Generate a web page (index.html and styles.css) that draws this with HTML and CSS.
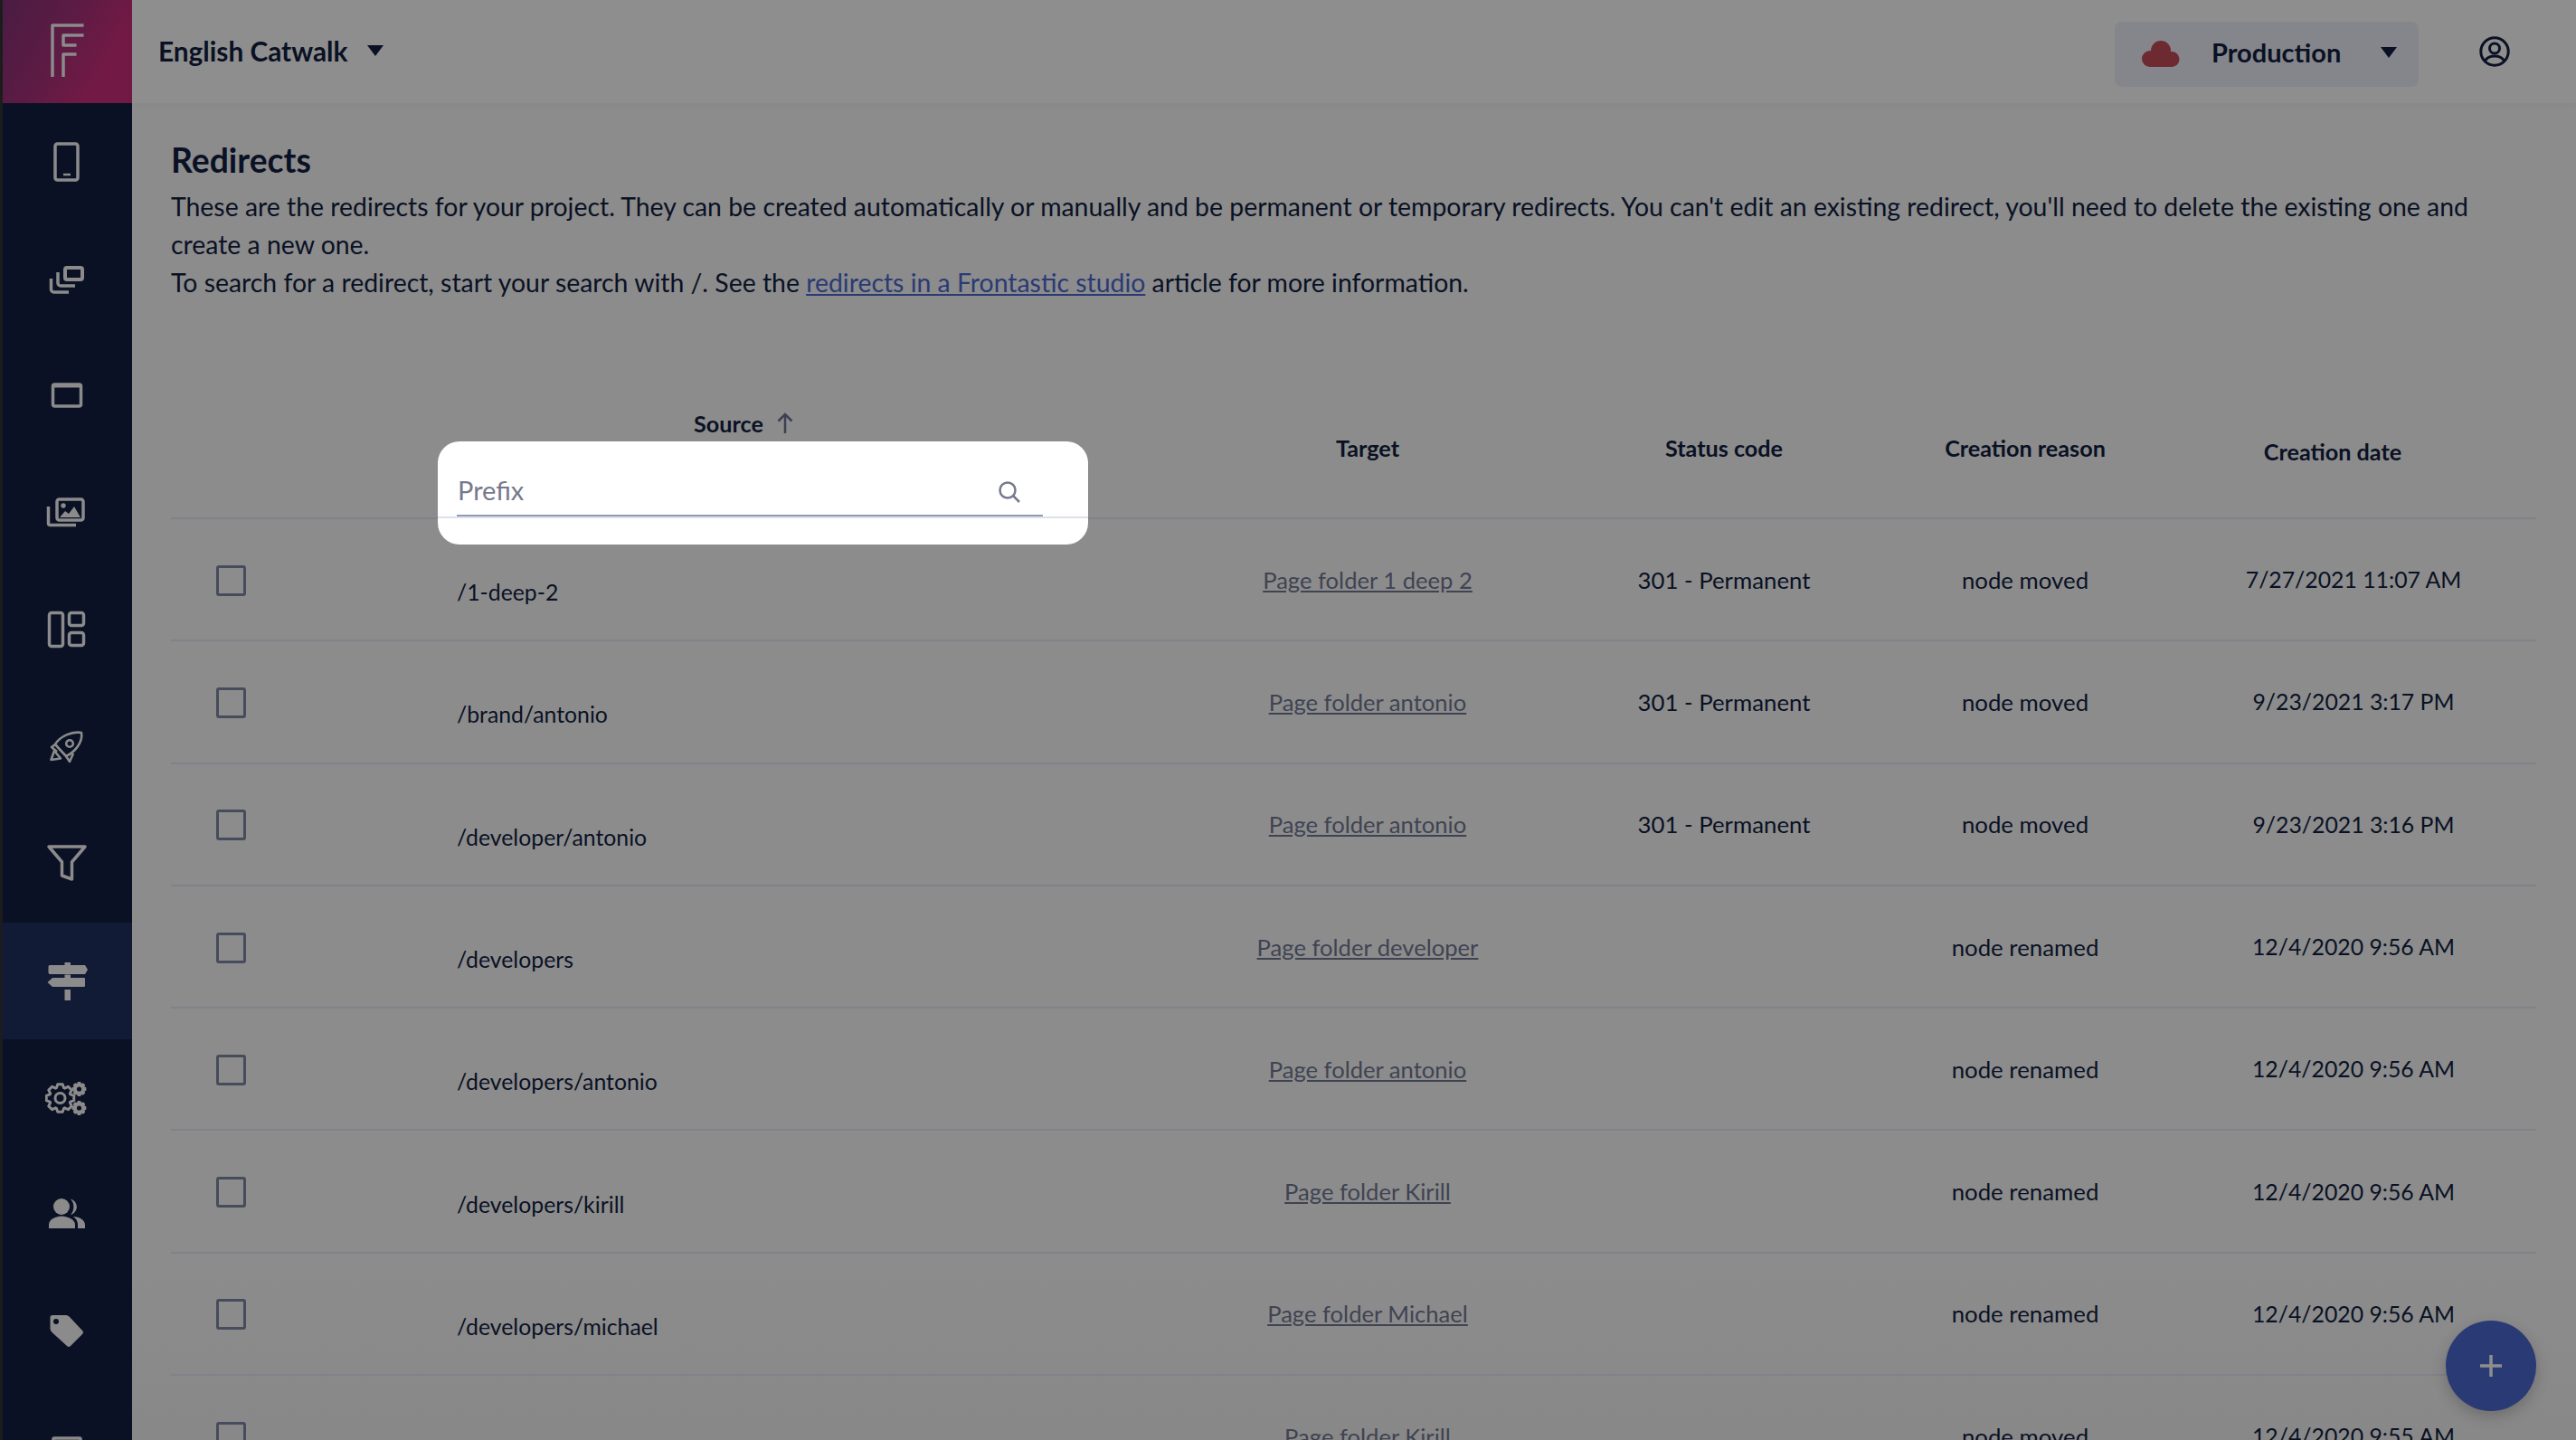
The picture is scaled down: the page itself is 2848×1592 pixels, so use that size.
FILE: index.html
```html
<!DOCTYPE html>
<html lang="en">
<head>
<meta charset="utf-8">
<title>Redirects</title>
<link rel="stylesheet" href="styles.css">
</head>
<body>
<div class="app">
  <nav class="rail">
    <div class="logo">
      <svg width="48" height="64" viewBox="0 0 48 64" class="ico-line"><path d="M7 60V3H41.500"/><path d="M41.500 14H19V25H33.500"/><path d="M33.500 35H19V60"/></svg>
    </div>
    <a class="rail-item"><svg width="48" height="48" viewBox="0 0 48 48" class="ico-line"><rect x="11" y="4" width="25" height="40" rx="2.5"/><path d="M20 38H28" stroke-width="2.5"/></svg></a>
    <a class="rail-item"><svg width="48" height="48" viewBox="0 0 48 48" class="ico-line"><path d="M24 12H39a2 2 0 0 1 2 2V23a2 2 0 0 1-2 2H24a2 2 0 0 1-2-2V14a2 2 0 0 1 2-2Z" stroke-width="4"/><path d="M14 17V29a3 3 0 0 0 3 3H33"/><path d="M6.500 24V36a3 3 0 0 0 3 3H26"/></svg></a>
    <a class="rail-item"><svg width="48" height="48" viewBox="0 0 48 48" class="ico-line"><rect x="8.500" y="12" width="31" height="24" rx="2"/><path d="M8 13.500H40" stroke-width="4"/></svg></a>
    <a class="rail-item"><svg width="48" height="48" viewBox="0 0 48 48"><g class="ico-line"><rect x="13" y="9" width="29" height="23" rx="2.500"/><path d="M3.500 17V35.500a2 2 0 0 0 2 2H34"/></g><circle cx="20" cy="16" r="2.700" class="ico-fill"/><path d="M16 29L22 22L26 25L32 17L39 29Z" class="ico-fill"/></svg></a>
    <a class="rail-item"><svg width="48" height="48" viewBox="0 0 48 48" class="ico-line"><rect x="4.500" y="5.500" width="15" height="37" rx="2.500"/><rect x="26.500" y="5.500" width="16" height="14" rx="2.500"/><rect x="26.500" y="27.500" width="16" height="14" rx="2.500"/></svg></a>
    <a class="rail-item"><svg width="48" height="48" viewBox="0 0 48 48" class="ico-line"><g stroke-width="2.600"><path d="M40 8C30 6 16 12 11 21L23 34C32 30 42 19 40 8Z"/><circle cx="27" cy="20" r="3.800"/><path d="M11 21L7 24L13 29M23 34L27 40L31 31"/><path d="M10 28L6.500 38L17 36.500Z"/></g></svg></a>
    <a class="rail-item"><svg width="48" height="48" viewBox="0 0 48 48" class="ico-line"><path d="M4 5H44L29.500 22V41L18.500 37V22Z"/></svg></a>
    <a class="rail-item is-active"><svg width="48" height="48" viewBox="0 0 48 48" class="ico-fill"><path d="M20.500 4H27V7H43L46 12L43 17H4Q2.500 17 2.500 15V9Q2.500 7 4 7H20.500Z"/><path d="M20.500 17.500H27V21H42Q43 21 43 22V30Q43 31 42 31H7L1.500 26L7 21H20.500Z"/><path d="M20.500 34H27V46H20.500Z"/></svg></a>
    <a class="rail-item"><svg width="48" height="48" viewBox="0 0 48 48">
      <g transform="translate(16.500 24)">
        <polygon id="gear" class="gear-line" points="11.28,-4.1 15.26,-2.69 15.26,2.69 11.28,4.1 10.88,5.07 12.7,8.89 8.89,12.7 5.07,10.88 4.1,11.28 2.69,15.26 -2.69,15.26 -4.1,11.28 -5.07,10.88 -8.89,12.7 -12.7,8.89 -10.88,5.07 -11.28,4.1 -15.26,2.69 -15.26,-2.69 -11.28,-4.1 -10.88,-5.07 -12.7,-8.89 -8.89,-12.7 -5.07,-10.88 -4.1,-11.28 -2.69,-15.26 2.69,-15.26 4.1,-11.28 5.07,-10.88 8.89,-12.7 12.7,-8.89 10.88,-5.07"/>
        <circle r="5.500" class="gear-line"/>
      </g>
      <g transform="translate(37.500 14) scale(.47)"><polygon class="gear-solid" points="11.28,-4.1 15.26,-2.69 15.26,2.69 11.28,4.1 10.88,5.07 12.7,8.89 8.89,12.7 5.07,10.88 4.1,11.28 2.69,15.26 -2.69,15.26 -4.1,11.28 -5.07,10.88 -8.89,12.7 -12.7,8.89 -10.88,5.07 -11.28,4.1 -15.26,2.69 -15.26,-2.69 -11.28,-4.1 -10.88,-5.07 -12.7,-8.89 -8.89,-12.7 -5.07,-10.88 -4.1,-11.28 -2.69,-15.26 2.69,-15.26 4.1,-11.28 5.07,-10.88 8.89,-12.7 12.7,-8.89 10.88,-5.07"/><circle r="5.500" class="hole"/></g>
      <g transform="translate(37.500 35) scale(.47)"><polygon class="gear-solid" points="11.28,-4.1 15.26,-2.69 15.26,2.69 11.28,4.1 10.88,5.07 12.7,8.89 8.89,12.7 5.07,10.88 4.1,11.28 2.69,15.26 -2.69,15.26 -4.1,11.28 -5.07,10.88 -8.89,12.7 -12.7,8.89 -10.88,5.07 -11.28,4.1 -15.26,2.69 -15.26,-2.69 -11.28,-4.1 -10.88,-5.07 -12.7,-8.89 -8.89,-12.7 -5.07,-10.88 -4.1,-11.28 -2.69,-15.26 2.69,-15.26 4.1,-11.28 5.07,-10.88 8.89,-12.7 12.7,-8.89 10.88,-5.07"/><circle r="5.500" class="hole"/></g>
    </svg></a>
    <a class="rail-item"><svg width="48" height="48" viewBox="0 0 48 48" class="ico-fill"><circle cx="18" cy="15" r="9"/><path d="M4 39V35C4 29 12 25.500 18 25.500C24 25.500 33 29 33 35V39Z"/><path d="M28 6.500A9 9 0 0 1 28 24A13 13 0 0 0 28 6.500Z"/><path d="M31 26C38 26 44 30 44 35V39H36V35C36 31 34 28 31 26Z"/></svg></a>
    <a class="rail-item"><svg width="48" height="48" viewBox="0 0 48 48"><path d="M8 5H23Q25 5 27 7L41 22Q43 24 41 26L28 39Q26 41 24 39L7.500 24Q5.500 22 5.500 20V7.500Q5.500 5 8 5Z" class="ico-fill"/><circle cx="12" cy="12" r="3" class="hole"/></svg></a>
    <a class="rail-item"><svg width="48" height="48" viewBox="0 0 48 48" class="ico-line"><rect x="9" y="12" width="30" height="26" rx="1"/></svg></a>
  </nav>

  <div class="main">
    <header class="topbar">
      <div class="project">
        <span>English Catwalk</span>
        <span class="caret"></span>
      </div>
      <div class="top-actions">
        <div class="env">
          <svg width="42" height="30" viewBox="0 0 42 30" class="cloud"><circle cx="21" cy="11" r="11"/><circle cx="9" cy="20" r="9"/><circle cx="33" cy="20.500" r="8.500"/><rect x="9" y="15" width="24" height="14"/></svg>
          <span class="env-name">Production</span>
          <span class="caret"></span>
        </div>
        <svg width="34" height="34" viewBox="0 0 34 34" class="user"><circle cx="17" cy="17" r="15.200"/><circle cx="17" cy="13.500" r="5.500"/><path d="M6.500 27C9 23 13 22 17 22C21 22 25 23 27.500 27"/></svg>
      </div>
    </header>

    <section class="content">
      <h1 class="title">Redirects</h1>
      <p class="intro">These are the redirects for your project. They can be created automatically or manually and be permanent or temporary redirects. You can't edit an existing redirect, you'll need to delete the existing one and<br>create a new one.<br>To search for a redirect, start your search with /. See the <a href="#" class="intro-link">redirects in a Frontastic studio</a> article for more information.</p>

      <div class="table">
        <div class="row head">
          <div></div>
          <div class="h-source">Source <svg width="20" height="24" viewBox="0 0 20 24" class="sort"><path d="M10 23V2M2.500 9.500L10 2L17.500 9.500"/></svg></div>
          <div class="h-cell">Target</div>
          <div class="h-cell">Status code</div>
          <div class="h-cell">Creation reason</div>
          <div class="h-cell h-date">Creation date</div>
        </div>

        <div class="row"><div><span class="check"></span></div><div class="src">/1-deep-2</div><a href="#" class="cell link">Page folder 1 deep 2</a><div class="cell">301 - Permanent</div><div class="cell">node moved</div><div class="cell date">7/27/2021 11:07 AM</div></div>
        <div class="row"><div><span class="check"></span></div><div class="src">/brand/antonio</div><a href="#" class="cell link">Page folder antonio</a><div class="cell">301 - Permanent</div><div class="cell">node moved</div><div class="cell date">9/23/2021 3:17 PM</div></div>
        <div class="row"><div><span class="check"></span></div><div class="src">/developer/antonio</div><a href="#" class="cell link">Page folder antonio</a><div class="cell">301 - Permanent</div><div class="cell">node moved</div><div class="cell date">9/23/2021 3:16 PM</div></div>
        <div class="row"><div><span class="check"></span></div><div class="src">/developers</div><a href="#" class="cell link">Page folder developer</a><div class="cell"></div><div class="cell">node renamed</div><div class="cell date">12/4/2020 9:56 AM</div></div>
        <div class="row"><div><span class="check"></span></div><div class="src">/developers/antonio</div><a href="#" class="cell link">Page folder antonio</a><div class="cell"></div><div class="cell">node renamed</div><div class="cell date">12/4/2020 9:56 AM</div></div>
        <div class="row"><div><span class="check"></span></div><div class="src">/developers/kirill</div><a href="#" class="cell link">Page folder Kirill</a><div class="cell"></div><div class="cell">node renamed</div><div class="cell date">12/4/2020 9:56 AM</div></div>
        <div class="row"><div><span class="check"></span></div><div class="src">/developers/michael</div><a href="#" class="cell link">Page folder Michael</a><div class="cell"></div><div class="cell">node renamed</div><div class="cell date">12/4/2020 9:56 AM</div></div>
        <div class="row"><div><span class="check"></span></div><div class="src">/developer/kirill</div><a href="#" class="cell link">Page folder Kirill</a><div class="cell"></div><div class="cell">node moved</div><div class="cell date">12/4/2020 9:55 AM</div></div>

        <div class="popover">
          <div class="field">
            <span class="placeholder">Prefix</span>
            <svg width="26" height="26" viewBox="0 0 26 26" class="search"><circle cx="11" cy="11" r="8.500"/><path d="M17 17L24 24"/></svg>
          </div>
          <div class="popover-rule"></div>
        </div>
      </div>
    </section>
  </div>

  <button class="fab" type="button"><svg width="26" height="26" viewBox="0 0 26 26" class="plus"><path d="M13 1V25M1 13H25"/></svg></button>
</div>
</body>
</html>
```

FILE: styles.css
```css
* { box-sizing: border-box; }
html, body { margin: 0; height: 100%; overflow: hidden; }
body {
  font-family: "Lato", "Noto Sans", sans-serif;
  color: #0a1124;
  background: #8c8c8c;
}
.app { display: flex; height: 1592px; position: relative; overflow: hidden; }

.rail {
  flex: 0 0 146px;
  background: #0a1124;
  border-left: 3px solid #1a1c1e;
  padding-right: 1px;
  overflow: hidden;
}
.logo {
  height: 114px;
  margin-right: -1px;
  display: flex;
  align-items: center;
  justify-content: center;
  background: linear-gradient(120deg, #4a1c42 0%, #5e1b44 45%, #721a45 75%);
}
.rail-item {
  height: 129.4px;
  display: flex;
  align-items: center;
  justify-content: center;
}
.rail-item.is-active { background: #111b35; margin-right: -1px; }
.ico-line { fill: none; stroke: #8b8b8b; stroke-width: 3.5; stroke-linejoin: round; stroke-linecap: butt; }
.ico-fill { fill: #8b8b8b; }
.hole { fill: #0a1124; }
.gear-line { fill: none; stroke: #8b8b8b; stroke-width: 3; stroke-linejoin: round; }
.gear-solid { fill: #8b8b8b; stroke: #8b8b8b; stroke-width: 3; stroke-linejoin: round; }

.main {
  flex: 1;
  min-width: 0;
  display: flex;
  flex-direction: column;
  background: linear-gradient(180deg, #8c8c8c 0, #8c8c8c 1400px, #888 1592px);
}
.topbar {
  flex: 0 0 114px;
  display: flex;
  align-items: center;
  justify-content: space-between;
  padding: 0 73px 0 29px;
  background: #8e8e8e;
  box-shadow: 0 2px 10px rgba(0, 0, 0, .03);
}
.project {
  display: flex;
  align-items: center;
  gap: 22px;
  margin-top: -2px;
  font-size: 29.8px;
  font-weight: 700;
}
.caret {
  width: 0;
  height: 0;
  border-left: 9px solid transparent;
  border-right: 9px solid transparent;
  border-top: 12px solid #0a1124;
}
.top-actions { display: flex; align-items: center; gap: 67px; }
.env {
  width: 336px;
  height: 72px;
  margin-top: 6px;
  display: flex;
  align-items: center;
  padding: 0 24px 5px 30px;
  background: #85868b;
  border-radius: 8px;
  font-size: 29px;
  font-weight: 700;
}
.cloud { fill: #6e2a31; margin: 5px 35px 0 0; }
.env-name { flex: 1; }
.user { fill: none; stroke: #0a1124; stroke-width: 3; }

.content { padding: 41px 44px 0 43px; }
.title { margin: 0 0 8px; font-size: 37.3px; line-height: 44px; font-weight: 700; }
.intro { margin: 0; font-size: 28.4px; line-height: 42px; white-space: nowrap; }
.intro-link { color: #2a3a75; text-decoration: underline; }

.table { position: relative; margin-top: 112px; }
.row {
  display: grid;
  grid-template-columns: 316px 736px 542px 246px 420px 306px;
  height: 135.3px;
  align-items: center;
  border-bottom: 2px solid #81818a;
  font-size: 25.8px;
}
.head { height: 129px; align-items: start; font-size: 25.2px; font-weight: 700; }
.h-source { padding: 7px 0 0 262px; line-height: 32px; display: flex; align-items: center; gap: 14px; }
.sort { fill: none; stroke: #3b4054; stroke-width: 2.500; }
.h-cell { padding-top: 34px; line-height: 32px; text-align: center; }
.h-date { padding: 38px 46px 0 0; }
.cell { text-align: center; }
.date { font-size: 24.8px; }
.src { padding-top: 28px; font-size: 24.8px; }
.link { color: #3f4352; font-size: 25.6px; text-decoration: underline; }
.check {
  display: block;
  width: 33px;
  height: 34px;
  margin: 2px 0 0 50px;
  border: 3.500px solid #474c5c;
  border-radius: 3px;
}

.popover {
  position: absolute;
  left: 295px;
  top: 43px;
  width: 719px;
  height: 114px;
  background: #fff;
  border-radius: 24px;
}
.field {
  height: 83px;
  margin: 0 50px 0 21px;
  padding: 0 24px 0 1px;
  display: flex;
  align-items: flex-end;
  justify-content: space-between;
  border-bottom: 2px solid #929bb6;
}
.placeholder { font-size: 29px; line-height: 48px; color: #76798c; padding-bottom: 3px; }
.search { fill: none; stroke: #76798c; stroke-width: 2.500; margin-bottom: 12px; }
.popover-rule { height: 2px; background: #dde1ec; }

.fab {
  position: absolute;
  right: 44px;
  bottom: 32px;
  width: 100px;
  height: 100px;
  padding: 0;
  border: 0;
  border-radius: 50%;
  background: #2a3a75;
  box-shadow: 0 6px 16px rgba(0, 0, 0, .2);
  display: flex;
  align-items: center;
  justify-content: center;
}
.plus { fill: none; stroke: #8e8e8e; stroke-width: 3.500; }
```
